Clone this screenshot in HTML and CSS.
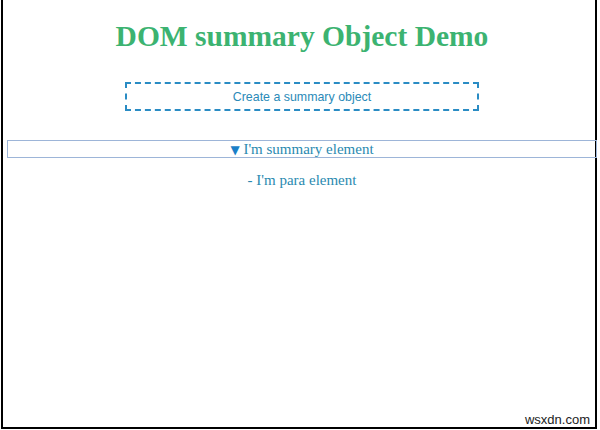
FILE: index.html
```html
<!DOCTYPE html>
<html>
<head>
<meta charset="utf-8">
<link rel="stylesheet" href="styles.css">
</head>
<body>
<div class="frame">
  <div class="page">
    <h1 class="title">DOM summary Object Demo</h1>
    <div class="btn-row">
      <button class="create-btn">Create a summary object</button>
    </div>
    <div class="details">
      <div class="summary"><span class="marker">&#9660;</span> I'm summary element</div>
      <p class="para">- I'm para element</p>
    </div>
  </div>
  <span class="watermark">wsxdn.com</span>
</div>
</body>
</html>
```
FILE: styles.css
```css
html, body {
  margin: 0;
  padding: 0;
  background: #ffffff;
}
.frame {
  position: relative;
  box-sizing: border-box;
  margin-left: 1px;
  width: 596px;
  height: 429px;
  border: 2px solid #000;
  border-top: none;
}
.page {
  margin-left: 4px;
  width: 590px;
  padding-top: 19px;
  font-family: "Liberation Serif", "Times New Roman", serif;
  text-align: center;
}
.title {
  margin: 0;
  font-size: 29.5px;
  line-height: 35px;
  font-weight: bold;
  color: #3cb371;
}
.btn-row {
  margin-top: 28px;
  display: flex;
  justify-content: center;
}
.create-btn {
  box-sizing: border-box;
  width: 354px;
  height: 29px;
  background: #fff;
  border: 2px dashed #2a8cc4;
  color: #2a8ab8;
  font-family: "Liberation Sans", Arial, sans-serif;
  font-size: 12.4px;
  padding: 0;
}
.details {
  margin-top: 29px;
}
.summary {
  box-sizing: border-box;
  height: 18px;
  border: 1px solid #9db5d8;
  color: #2a8ab0;
  font-size: 15px;
  line-height: 16px;
}
.marker {
  color: #1a7fc8;
  font-size: 12px;
  font-family: "DejaVu Sans", sans-serif;
}
.para {
  margin: 14px 0 0;
  color: #2a8ab0;
  font-size: 15px;
  line-height: 17px;
}
.watermark {
  position: absolute;
  right: 5px;
  bottom: 0px;
  font-family: "Liberation Sans", Arial, sans-serif;
  font-size: 13px;
  color: #222;
}
```
